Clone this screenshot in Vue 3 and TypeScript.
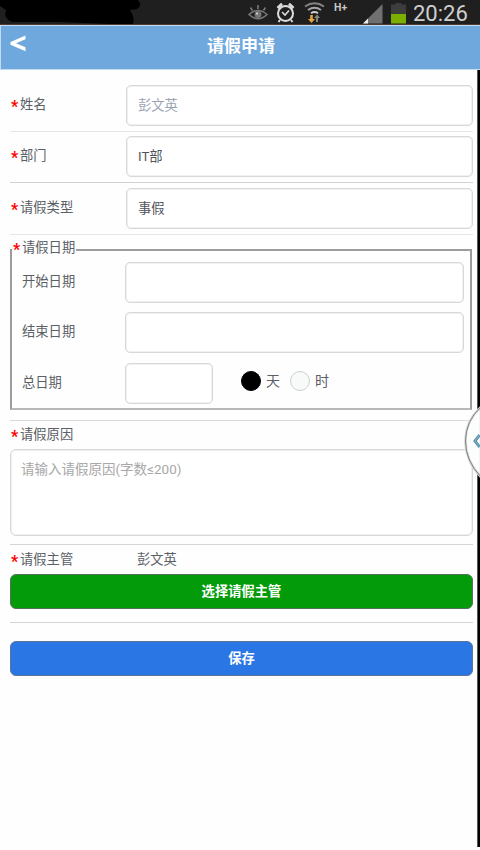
<script setup lang="ts">
import { ref } from 'vue'

interface Field {
  key: string
  label: string
  value: string
  muted?: boolean
}

const fields = ref<Field[]>([
  { key: 'name', label: '姓名', value: '彭文英', muted: true },
  { key: 'dept', label: '部门', value: 'IT部' },
  { key: 'type', label: '请假类型', value: '事假' },
])
const start = ref('')
const end = ref('')
const total = ref('')
const unit = ref<'day' | 'hour'>('day')
const reason = ref('')
const manager = ref('彭文英')
</script>

<template>
  <div class="screen">
    <div class="status">
      <svg class="redaction" viewBox="0 0 145 24" width="145" height="24">
        <path d="M0 0H138Q143 6 137 9L130 10Q135 18 133 24H110L60 22L12 22Q3 18 6 10L0 6Z" fill="#000" />
      </svg>
      <svg class="icons" viewBox="0 0 165 24" width="165" height="24">
        <g fill="none" stroke="#777" stroke-width="1.6">
          <path d="M1 14.5Q10 6.500 19 14.500Q10 23 1 14.500Z" />
          <path d="M10 9V5M4.500 10.500L2.500 7.500M15.500 10.500L17.500 7.500" />
        </g>
        <circle cx="10" cy="14.500" r="3.500" fill="#777" />
        <circle cx="9" cy="13.500" r="1" fill="#ddd" />
        <g fill="none" stroke="#ddd" stroke-width="2">
          <circle cx="37.500" cy="13.500" r="7.500" />
          <path d="M34 12L37 15L41 10.500" stroke-width="1.600" />
          <path d="M29.500 8L34 3.800M41 3.800L45.500 8" stroke-width="2.600" />
          <path d="M32 20L30.500 22M43 20L44.500 22" />
        </g>
        <g fill="none" stroke="#858585" stroke-width="2">
          <path d="M57 6.500Q66.500 .2 76 6.500" />
          <path d="M60 10Q66.500 5.500 73 10" stroke="#a5a5a5" />
          <path d="M63 13.200Q66.500 10.800 70 13.200" stroke="#ccc" />
        </g>
        <path d="M62.200 15h2.600v4h2.200L63.500 23L60 19h2.200Z" fill="#e6a33c" />
        <path d="M68 22v-4h-2L69.200 14.500L72 18h-2v4Z" fill="#858585" />
        <path d="M115 23.500L134.500 4V23.500Z" fill="#707070" />
        <path d="M115 23.500L120 18.500V23.500Z" fill="#eee" />
        <path d="M143 4.500h4.500V3h6v1.500H158V14H143Z" fill="#3d3d3d" />
        <path d="M143 14H158V23.500H143Z" fill="#7cae00" />
      </svg>
      <span class="net">H+</span>
      <span class="clock">20:26</span>
    </div>

    <header class="header">
      <button class="back" aria-label="返回">
        <svg viewBox="0 0 16 17" width="16" height="17">
          <path d="M15.500 .500V4.300L6 8.300L15.500 12.300V16.200L.500 9.800V6.900Z" fill="#fff" />
        </svg>
      </button>
      <h1>请假申请</h1>
    </header>

    <main class="form">
      <div v-for="f in fields" :key="f.key" class="row" :class="f.key">
        <label class="label"><i class="star">*</i>{{ f.label }}</label>
        <input v-model="f.value" class="box" :class="{ muted: f.muted }" type="text" />
      </div>

      <fieldset class="dates">
        <legend><i class="star">*</i>请假日期</legend>
        <div class="date-row">
          <label class="label">开始日期</label>
          <input v-model="start" class="box" type="text" />
        </div>
        <div class="date-row">
          <label class="label">结束日期</label>
          <input v-model="end" class="box" type="text" />
        </div>
        <div class="date-row">
          <label class="label">总日期</label>
          <input v-model="total" class="box short" type="text" />
          <div class="units">
            <span class="unit" @click="unit = 'day'"><b class="dot" :class="{ on: unit === 'day' }"></b>天</span>
            <span class="unit" @click="unit = 'hour'"><b class="dot" :class="{ on: unit === 'hour' }"></b>时</span>
          </div>
        </div>
      </fieldset>

      <section class="reason">
        <label class="label"><i class="star">*</i>请假原因</label>
        <textarea v-model="reason" class="area" placeholder="请输入请假原因(字数≤200)"></textarea>
      </section>

      <section class="manager">
        <div class="manager-line">
          <span class="label"><i class="star">*</i>请假主管</span>
          <span class="person">{{ manager }}</span>
        </div>
        <button class="btn green">选择请假主管</button>
      </section>

      <section class="submit">
        <button class="btn blue">保存</button>
      </section>
    </main>

    <div class="edge"></div>
    <svg class="handle" viewBox="0 0 18 76" width="18" height="76">
      <path d="M19 3Q3.500 17 3.500 37Q3.500 57 19 73Z" fill="#fcfdfd" stroke="#d8d8d8" stroke-width="2.500" />
      <path d="M19 3Q3.500 17 3.500 37Q3.500 57 19 73" fill="none" stroke="#808080" stroke-width="1" />
      <path d="M17.500 31L13 37L17.500 43" fill="none" stroke="#46707e" stroke-width="2.800" />
      <path d="M17.500 31L13 37L17.500 43" fill="none" stroke="#68b2d2" stroke-width="1.600" />
    </svg>
  </div>
</template>

<style>
body {
  margin: 0;
  background: #fefefe;
}
</style>

<style scoped>
* {
  box-sizing: border-box;
}
.screen {
  position: relative;
  width: 480px;
  height: 850px;
  overflow: hidden;
  background: #fefefe;
  color: #5b5f66;
  font: 13.3px/20px Roboto, "Noto Sans CJK SC", sans-serif;
}
.status {
  position: relative;
  height: 25px;
  background: #1f1f1f;
  border-bottom: 1px solid #4e3c32;
}
.redaction {
  position: absolute;
  left: 0;
  top: 0;
}
.icons {
  position: absolute;
  left: 248px;
  top: 0;
}
.net {
  position: absolute;
  left: 334px;
  top: 2px;
  font: 700 10.5px/12px Roboto, sans-serif;
  color: #c8c8c8;
}
.clock {
  position: absolute;
  left: 413px;
  top: 1px;
  font: 400 22px/25px Roboto, sans-serif;
  color: #cfcfcf;
  white-space: nowrap;
}
.header {
  display: flex;
  align-items: flex-start;
  height: 45px;
  padding: 9px 9px 0;
  background: #6fa8dd;
  border: solid #c4dcf1;
  border-width: 1px 0 1px 1px;
}
.back {
  width: 16px;
  height: 17px;
  padding: 0;
  border: 0;
  background: none;
}
.back svg {
  display: block;
}
.header h1 {
  flex: 1;
  margin: 1px 15px 0 0;
  text-align: center;
  color: #fff;
  font-size: 17px;
  line-height: 20px;
  font-weight: 700;
}
.form {
  padding: 10px 7px 0 10px;
}
.row {
  display: flex;
  height: 52px;
  padding-top: 5px;
  border-bottom: 1px solid #e6e6e6;
}
.row.dept {
  height: 51px;
  padding-top: 4px;
  border-bottom-color: #d2d2d2;
}
.label {
  flex: none;
  width: 116px;
  line-height: 39px;
  white-space: nowrap;
}
.star {
  display: inline-block;
  width: 10px;
  padding-left: 1px;
  color: #f00;
  font: 700 16px/10px Roboto, sans-serif;
  vertical-align: -3px;
}
.box {
  display: block;
  flex: 1;
  min-width: 0;
  height: 41px;
  padding: 0 11px 2px;
  border: 1px solid #d8d8d8;
  border-radius: 5px;
  box-shadow: inset 0 0 0 1px #f1f1f1;
  outline: 0;
  background: #fff;
  color: #50545b;
  font: inherit;
}
.box.muted {
  color: #9ba3b3;
}
.dates {
  display: block;
  height: 169px;
  margin: 6px 1px 0 0;
  padding: 3px 6px 0 10px;
  border: 2px solid #9c9c9c;
  border-bottom-color: #b8b8b8;
}
.dates legend {
  height: 18px;
  margin-left: -10px;
  padding: 0 1px 0 0;
  line-height: 14px;
}
.date-row {
  display: flex;
  height: 50.3px;
}
.date-row .label {
  width: 103px;
}
.date-row .box.short {
  flex: none;
  width: 88px;
}
.units {
  display: flex;
  gap: 10px;
  height: 36px;
  padding-left: 28px;
}
.unit {
  display: flex;
  align-items: center;
  gap: 5px;
  font-size: 14px;
}
.dot {
  width: 20px;
  height: 20px;
  border: 1px solid #ccd1d1;
  border-radius: 50%;
  background: #f8f9f9;
}
.dot.on {
  border-color: #000;
  background: #000;
}
.reason {
  height: 124px;
  margin-top: 10px;
  border-top: 1px solid #dadada;
}
.reason .label {
  display: block;
  height: 28px;
  line-height: 27px;
}
.area {
  display: block;
  width: 100%;
  height: 87px;
  padding: 9px 10px;
  border: 1px solid #d8d8d8;
  border-radius: 6px;
  box-shadow: inset 0 0 0 1px #f1f1f1;
  outline: 0;
  resize: none;
  background: #fff;
  font: 13.500px/20px Roboto, "Noto Sans CJK SC", sans-serif;
}
.area::placeholder {
  color: #a8a8a8;
  opacity: 1;
}
.manager {
  height: 78px;
  border-top: 1px solid #d6d6d6;
}
.manager-line {
  display: flex;
  height: 29px;
}
.manager-line .label,
.person {
  line-height: 29px;
}
.person {
  padding-left: 11px;
}
.btn {
  display: block;
  width: 100%;
  height: 35px;
  padding: 0;
  border: 1px solid #55705c;
  border-radius: 6px;
  color: #fff;
  font: 700 13.300px/33px Roboto, "Noto Sans CJK SC", sans-serif;
}
.green {
  background: #049b0a;
}
.blue {
  border-color: #5c7599;
  background: #2a76e4;
}
.submit {
  padding-top: 18px;
  border-top: 1px solid #d6d6d6;
}
.edge {
  position: absolute;
  right: 0;
  top: 70px;
  width: 3px;
  height: 777px;
  border-left: 1px solid #555;
  background: #000;
}
.handle {
  position: absolute;
  right: 0;
  top: 404px;
}
</style>
